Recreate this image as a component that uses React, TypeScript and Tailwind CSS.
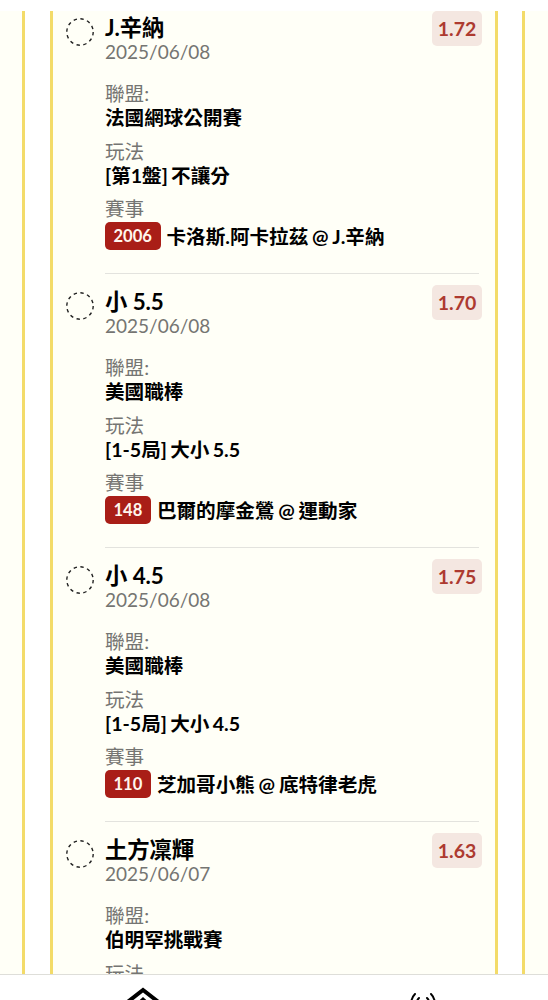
type Pick = {
  title: string;
  date: string;
  odds: string;
  league: string;
  play: string;
  code?: string;
  match?: string;
};

const picks: Pick[] = [
  {
    title: "J.辛納",
    date: "2025/06/08",
    odds: "1.72",
    league: "法國網球公開賽",
    play: "[第1盤] 不讓分",
    code: "2006",
    match: "卡洛斯.阿卡拉茲 @ J.辛納",
  },
  {
    title: "小 5.5",
    date: "2025/06/08",
    odds: "1.70",
    league: "美國職棒",
    play: "[1-5局] 大小 5.5",
    code: "148",
    match: "巴爾的摩金鶯 @ 運動家",
  },
  {
    title: "小 4.5",
    date: "2025/06/08",
    odds: "1.75",
    league: "美國職棒",
    play: "[1-5局] 大小 4.5",
    code: "110",
    match: "芝加哥小熊 @ 底特律老虎",
  },
  {
    title: "土方凜輝",
    date: "2025/06/07",
    odds: "1.63",
    league: "伯明罕挑戰賽",
    play: "",
  },
];

const Label = ({ children }: { children: string }) => (
  <p className="h-6 leading-6 text-[#757572]">{children}</p>
);

const PickItem = ({ pick }: { pick: Pick }) => (
  <div className="flex h-[274px] shrink-0 pr-[13px] pl-[13px]">
    <svg className="mt-[18px] h-7 w-7 shrink-0" viewBox="0 0 28 28" fill="none">
      <circle
        cx="14"
        cy="14"
        r="13.2"
        stroke="#222"
        strokeWidth="1.4"
        strokeDasharray="3.4 3.51"
      />
    </svg>
    <div className="ml-[11px] flex-1">
      <div className="mr-[3px] h-[274px] border-b border-[#e3e3de]">
        <div className="flex h-[82px] justify-between">
          <div className="pt-4">
            <h3 className="h-6 text-[22.4px] leading-6 font-bold tracking-[-0.1px]">
              {pick.title}
            </h3>
            <p className="h-6 text-[19px] leading-[23px] text-[#757572]">
              {pick.date}
            </p>
          </div>
          <span className="mt-[11px] -mr-[3px] h-[35px] w-[50px] rounded-[5px] bg-[#f4e7e1] text-center text-[19.5px] leading-[36px] font-bold text-[#ad3a30]">
            {pick.odds}
          </span>
        </div>
        <Label>聯盟:</Label>
        <p className="h-6 leading-6 font-bold">{pick.league}</p>
        <div className="mt-[10px]">
          <Label>玩法</Label>
          <p className="h-6 leading-6 font-bold [word-spacing:-1.5px]">
            {pick.play}
          </p>
        </div>
        {pick.match && (
          <div className="mt-[9px]">
            <Label>賽事</Label>
            <div className="mt-[1px] flex h-7 items-center gap-[6px]">
              <span className="h-7 rounded-[5px] bg-[#a91e17] px-[8.5px] text-[16.6px] leading-7 font-bold text-[#fff6ee]">
                {pick.code}
              </span>
              <span className="pt-[2px] font-bold [word-spacing:-1px]">
                {pick.match}
              </span>
            </div>
          </div>
        )}
      </div>
    </div>
  </div>
);

const App = () => {
  return (
    <div className="flex h-[1000px] w-[548px] flex-col overflow-hidden bg-white font-[Lato,'Noto_Sans_CJK_TC',sans-serif] text-[19.6px] text-black">
      <div className="h-[11px] shrink-0" />
      <div className="flex h-[963px] shrink-0">
        <div className="w-[25px] border-r-3 border-[#f3db69] bg-[#fffff7]" />
        <div className="w-[25px]" />
        {/* Lista de pronósticos */}
        <div className="flex w-[448px] flex-col overflow-hidden border-x-3 border-[#f3db69] bg-[#fffff7]">
          <div className="-mt-[11px]">
            {picks.map((pick) => (
              <PickItem key={pick.title} pick={pick} />
            ))}
          </div>
        </div>
        <div className="w-6" />
        <div className="flex-1 border-l-3 border-[#f3db69] bg-[#fffff7]" />
      </div>

      {/* Barra inferior */}
      <div className="flex flex-1 overflow-hidden border-t border-[#deded9]">
        <div className="flex w-[286px] shrink-0 justify-center pt-3">
          <svg className="h-10 w-10 shrink-0" viewBox="0 0 40 40" fill="none">
            <path d="M2 17 20 3l18 14v20H2z" stroke="#000" strokeWidth="4" />
            <path d="M8 21 20 10l12 11v16H8z" fill="#000" />
          </svg>
        </div>
        <div className="flex w-[274px] shrink-0 justify-center pt-4">
          <svg
            className="h-[26px] w-[30px] shrink-0"
            viewBox="0 0 30 26"
            fill="none"
            stroke="#000"
            strokeWidth="2"
            strokeLinecap="round"
          >
            <path d="M7 3C2 8 2 16 7 21M23 3c5 5 5 13 0 18M11 7c-3 3-3 7 0 10M19 7c3 3 3 7 0 10" />
          </svg>
        </div>
      </div>
    </div>
  );
};

export default App;
